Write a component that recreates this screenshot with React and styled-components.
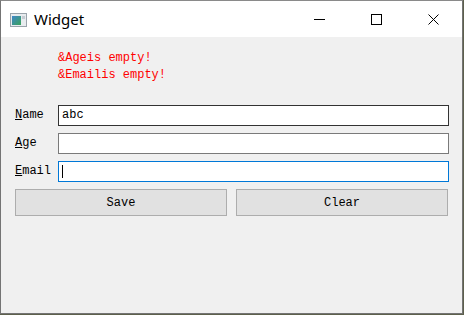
import styled, { createGlobalStyle } from "styled-components";

const Global = createGlobalStyle`
    html, body {
        margin: 0;
        padding: 0;
        background: #5d604c;
    }
    #root {
        width: 464px;
        height: 315px;
    }
`

const Window = styled.div`
    width: 461px;
    height: 312px;
    border: 1px solid #747474;
    border-top-color: #8a8a8a;
    background: #f0f0f0;
    display: flex;
    flex-direction: column;
    font-family: "Liberation Mono", "DejaVu Sans Mono", monospace;
    font-size: 12px;
    color: #000;
`

const TitleBar = styled.div`
    height: 36px;
    background: #ffffff;
    display: flex;
    align-items: center;
`

const AppIcon = styled.svg`
    margin-left: 9px;
    margin-top: 1px;
`

const Title = styled.span`
    margin-left: 7px;
    font-family: "Noto Sans", "Open Sans", sans-serif;
    font-size: 15px;
    color: #000;
    flex: 1;
    margin-top: -1px;
`

const CaptionButton = styled.div`
    width: 57px;
    height: 36px;
    display: flex;
    align-items: center;
    justify-content: center;
`

const Body = styled.div`
    flex: 1;
    padding: 13px 13px 0 13px;
`

const Errors = styled.div`
    margin-left: 44px;
    color: #ff0000;
    line-height: 17px;
`

const Form = styled.div`
    margin-top: 21px;
    display: grid;
    grid-template-columns: 44px 1fr;
    row-gap: 7px;
    align-items: center;
`

const Label = styled.label`
    line-height: 21px;
    padding-left: 1px;
`

const Field = styled.div`
    height: 21px;
    box-sizing: border-box;
    background: #fff;
    border: 1px solid ${p => p.$tone === "hover" ? "#333333" : p.$tone === "focus" ? "#0078d7" : "#7a7a7a"};
    padding: 0 3px;
    line-height: 19px;
    display: flex;
    align-items: center;
`

const Caret = styled.span`
    width: 1px;
    height: 13px;
    background: #000;
`

const Buttons = styled.div`
    margin: 7px 1px 0 1px;
    display: flex;
    gap: 9px;
`

const Button = styled.button`
    flex: 1;
    height: 27px;
    background: #e1e1e1;
    border: 1px solid #adadad;
    font-family: inherit;
    font-size: 12px;
    color: #000;
    padding: 0;
`

function App() {
    return (
        <>
            <Global />
            <Window>
                <TitleBar>
                    <AppIcon width="17" height="14" viewBox="0 0 17 14">
                        <defs>
                            <linearGradient id="ico" x1="0" y1="0" x2="1" y2="1">
                                <stop offset="0" stopColor="#3f86c9" />
                                <stop offset="1" stopColor="#3aa35a" />
                            </linearGradient>
                        </defs>
                        <rect x="0.5" y="0.5" width="16" height="13" fill="#e8ecef" stroke="#9aa3ab" />
                        <rect x="2" y="3" width="9" height="9" fill="url(#ico)" />
                        <rect x="12" y="3" width="3" height="3" fill="#c6ccd2" />
                    </AppIcon>
                    <Title>Widget</Title>
                    <CaptionButton>
                        <svg width="11" height="11" viewBox="0 0 11 11">
                            <line x1="0" y1="5.5" x2="11" y2="5.5" stroke="#000" strokeWidth="1" />
                        </svg>
                    </CaptionButton>
                    <CaptionButton>
                        <svg width="11" height="11" viewBox="0 0 11 11">
                            <rect x="0.5" y="0.5" width="10" height="10" fill="none" stroke="#000" strokeWidth="1" />
                        </svg>
                    </CaptionButton>
                    <CaptionButton>
                        <svg width="11" height="11" viewBox="0 0 11 11">
                            <path d="M0.5 0.5 L10.5 10.5 M10.5 0.5 L0.5 10.5" stroke="#000" strokeWidth="1" />
                        </svg>
                    </CaptionButton>
                </TitleBar>
                <Body>
                    <Errors>
                        <div>&amp;Ageis empty!</div>
                        <div>&amp;Emailis empty!</div>
                    </Errors>
                    <Form>
                        <Label><u>N</u>ame</Label>
                        <Field $tone="hover">abc</Field>
                        <Label><u>A</u>ge</Label>
                        <Field />
                        <Label><u>E</u>mail</Label>
                        <Field $tone="focus"><Caret /></Field>
                    </Form>
                    <Buttons>
                        <Button>Save</Button>
                        <Button>Clear</Button>
                    </Buttons>
                </Body>
            </Window>
        </>
    )
}

export default App;
